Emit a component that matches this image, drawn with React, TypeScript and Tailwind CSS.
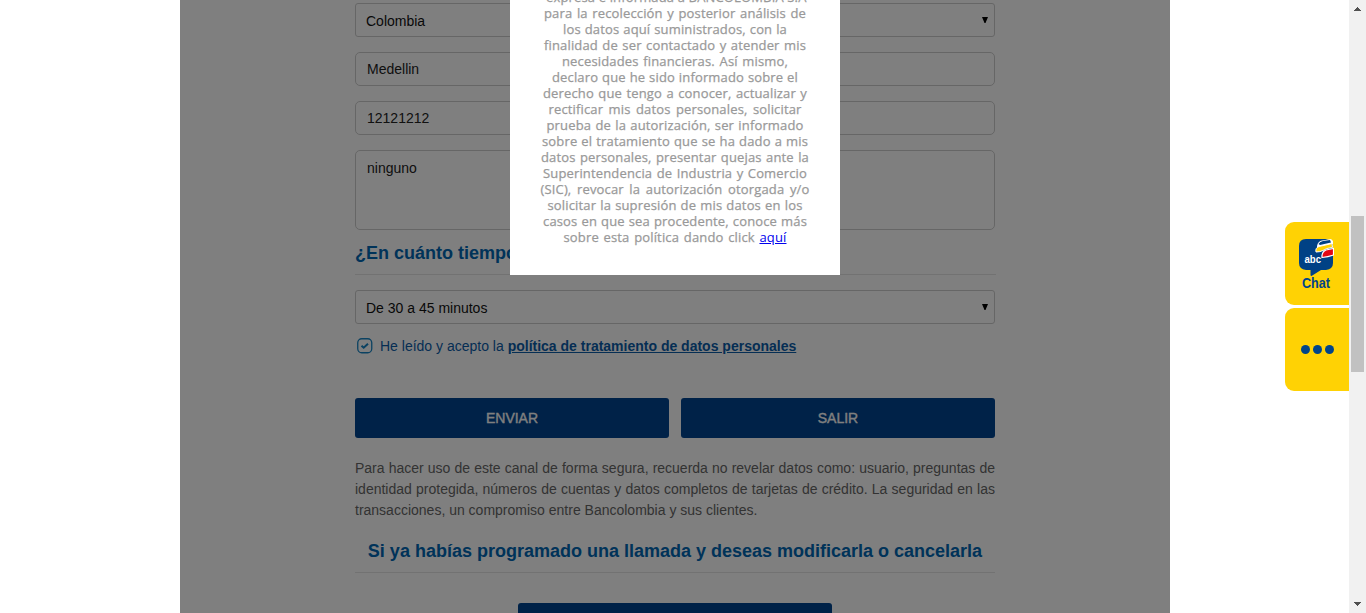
import React from "react";

const policyLines: [string, number][] = [
  ["expresa e informada a BANCOLOMBIA S.A", 258],
  ["para la recolección y posterior análisis de", 262],
  ["los datos aquí suministrados, con la", 224],
  ["finalidad de ser contactado y atender mis", 262],
  ["necesidades financieras. Así mismo,", 226],
  ["declaro que he sido informado sobre el", 246],
  ["derecho que tengo a conocer, actualizar y", 264],
  ["rectificar mis datos personales, solicitar", 253],
  ["prueba de la autorización, ser informado", 257],
  ["sobre el tratamiento que se ha dado a mis", 266],
  ["datos personales, presentar quejas ante la", 268],
  ["Superintendencia de Industria y Comercio", 264],
  ["(SIC), revocar la autorización otorgada y/o", 269],
  ["solicitar la supresión de mis datos en los", 255],
  ["casos en que sea procedente, conoce más", 264],
];

function Select({ value }: { value: string }) {
  return (
    <div className="flex h-[34px] items-center justify-between rounded-[3px] border border-[#ccc] pl-2.5 pr-[6px] text-sm text-[#111]">
      <span className="pt-[2px]">{value}</span>
      <svg width="6" height="6" viewBox="0 0 6 6" className="mb-px"><path d="M0 0H6L3.5 6H2.5Z" fill="#000" /></svg>
    </div>
  );
}

function Field({ value, tall }: { value: string; tall?: boolean }) {
  return (
    <div className={`mt-[15px] rounded-[5px] border border-[#ccc] pl-[11px] text-sm leading-5 text-[#222] ${tall ? "h-[80px] pt-[7px]" : "h-[34px] pt-[6px]"}`}>
      {value}
    </div>
  );
}

function Button({ children }: { children: React.ReactNode }) {
  return <button className="h-10 w-[314px] rounded-[3px] bg-[#004490] text-sm font-medium text-white [-webkit-text-stroke:0.35px_white]">{children}</button>;
}

function Form() {
  return (
    <div className="ml-[175px] w-[640px] pt-[3px]">
      <Select value="Colombia" />
      <Field value="Medellin" />
      <Field value="12121212" />
      <Field value="ninguno" tall />
      <h2 className="h-[45px] w-[641px] border-b border-[#e5e5e5] pt-[11px] text-lg leading-6 font-bold text-[#0066b3]">
        ¿En cuánto tiempo
      </h2>
      <div className="mt-[15px]"><Select value="De 30 a 45 minutos" /></div>
      <div className="mt-[12px] flex h-5 items-center text-sm text-[#0b5ca8]">
        <svg width="16" height="16" viewBox="0 0 16 16" fill="none" className="ml-[2px] mr-[7px] -mt-px">
          <rect x=".75" y=".75" width="14" height="14" rx="4" stroke="#1684c4" strokeWidth="1.3" />
          <path d="M4.5 7.7L6.7 9.7L11 5.7" stroke="#1684c4" strokeWidth="2" />
        </svg>
        <span>He leído y acepto la <b className="underline">política de tratamiento de datos personales</b></span>
      </div>
      <div className="mt-[42px] flex justify-between">
        <Button>ENVIAR</Button>
        <Button>SALIR</Button>
      </div>
      <div className="mt-[20px] text-sm leading-[21px] whitespace-nowrap text-[#666]">
        <p className="[text-align-last:justify]">Para hacer uso de este canal de forma segura, recuerda no revelar datos como: usuario, preguntas de</p>
        <p className="[text-align-last:justify]">identidad protegida, números de cuentas y datos completos de tarjetas de crédito. La seguridad en las</p>
        <p>transacciones, un compromiso entre Bancolombia y sus clientes.</p>
      </div>
      <h2 className="mt-[18px] h-[34px] w-[640px] border-b border-[#e5e5e5] text-center text-lg leading-6 font-bold whitespace-nowrap text-[#0066b3]">
        Si ya habías programado una llamada y deseas modificarla o cancelarla
      </h2>
      <div className="mt-[30px] flex justify-center"><Button>{null}</Button></div>
    </div>
  );
}

function Policy() {
  return (
    <div className="absolute top-0 left-[330px] h-[275px] w-[330px] overflow-hidden bg-white font-['Open_Sans',sans-serif] text-[13px] leading-4 tracking-[0.15px] text-[#999] [-webkit-text-stroke:0.25px_currentColor]">
      <div className="-mt-[11px] flex flex-col items-center">
        {policyLines.map(([text, width]) => (
          <p key={text} className="whitespace-nowrap [text-align-last:justify]" style={{ width }}>{text}</p>
        ))}
        <p className="w-[223px] whitespace-nowrap [text-align-last:justify]">sobre esta política dando click <a className="text-[#0000ee] underline [-webkit-text-stroke:0]">aquí</a></p>
      </div>
    </div>
  );
}

function Dock() {
  return (
    <aside className="flex w-[64px] flex-col gap-[3px] pt-[222px]">
      <div className="flex h-[83px] flex-col items-center rounded-l-[9px] bg-[#ffd204] pt-[16px]">
        <svg width="36" height="39" viewBox="0 0 36 39" className="-ml-[2px]">
          <path d="M8 1H28Q35 2 35 9V25Q35 31 28 32H23L13.500 38Q12.500 38 12.500 37V32H8Q1 31 1 25V8Q1 1 8 1Z" fill="#004185" />
          <path d="M19 8Q20 3 24 2.500L33 1L35 3V6L27 8L19 10Z" fill="#fff" />
          <path d="M20.500 6Q22 3.500 25 3L32 2L33 4.500L22 7Z" fill="#004185" />
          <path d="M18 14Q17 10 21 8.500L34 5.500L34.500 9.500Q28 10 25 12.500Q22 14 18 14Z" fill="#ffd204" stroke="#fff" strokeWidth="1" />
          <path d="M24 19.500Q23.500 14 28 12L35.500 10.500V17Q30 19 24 19.500Z" fill="#e30613" stroke="#fff" strokeWidth="1.200" />
          <text x="6.500" y="24.500" fontFamily="Liberation Sans" fontSize="10.500" fontWeight="bold" fill="#fff" textLength="16.500" lengthAdjust="spacingAndGlyphs">abc</text>
        </svg>
        <svg width="30" height="14" viewBox="0 0 30 14" className="-ml-[2px] -mt-px">
          <text x="1" y="11.500" fontFamily="Liberation Sans" fontSize="14" fontWeight="bold" fill="#00448a" textLength="28" lengthAdjust="spacingAndGlyphs">Chat</text>
        </svg>
      </div>
      <div className="flex h-[83px] items-center justify-center gap-[3px] rounded-l-[9px] bg-[#ffd204]">
        {[0, 1, 2].map((i) => <span key={i} className="size-[9px] rounded-full bg-[#00448a]" />)}
      </div>
    </aside>
  );
}

function Scrollbar() {
  return (
    <div className="flex w-[17px] flex-col items-center bg-[#f1f1f1]">
      <svg width="7" height="4" viewBox="0 0 7 4" className="mt-[7px]" shapeRendering="crispEdges"><path d="M0 4L3.5 0L7 4Z" fill="#505050" /></svg>
      <div className="mt-[205px] h-[156px] w-[13px] bg-[#c1c1c1]" />
      <svg width="7" height="4" viewBox="0 0 7 4" className="mt-auto mb-[7px]" shapeRendering="crispEdges"><path d="M0 0L3.5 4L7 0Z" fill="#505050" /></svg>
    </div>
  );
}

export default function App() {
  return (
    <div className="flex h-[613px] w-[1366px] overflow-hidden bg-white font-['Liberation_Sans',Arial,sans-serif]">
      <main className="relative ml-[180px] h-full w-[990px] overflow-hidden">
        <Form />
        <div className="absolute inset-0 bg-black/50" />
        <Policy />
      </main>
      <div className="ml-auto flex">
        <Dock />
        <Scrollbar />
      </div>
    </div>
  );
}
